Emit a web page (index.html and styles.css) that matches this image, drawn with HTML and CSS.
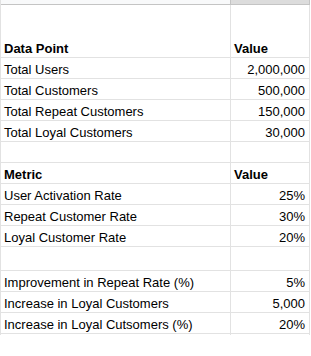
FILE: index.html
```html
<!DOCTYPE html>
<html>
<head>
<meta charset="utf-8">
<link rel="stylesheet" href="styles.css">
</head>
<body>
<div class="sheet">
  <div class="hdr"><div class="hc a"></div><div class="hc b"></div></div>
  <div class="r tall"><div class="c a bold">Data Point</div><div class="c b bold left">Value</div></div>
  <div class="r"><div class="c a">Total Users</div><div class="c b">2,000,000</div></div>
  <div class="r"><div class="c a">Total Customers</div><div class="c b">500,000</div></div>
  <div class="r"><div class="c a">Total Repeat Customers</div><div class="c b">150,000</div></div>
  <div class="r"><div class="c a">Total Loyal Customers</div><div class="c b">30,000</div></div>
  <div class="r"><div class="c a"></div><div class="c b"></div></div>
  <div class="r"><div class="c a bold">Metric</div><div class="c b bold left">Value</div></div>
  <div class="r"><div class="c a">User Activation Rate</div><div class="c b">25%</div></div>
  <div class="r"><div class="c a">Repeat Customer Rate</div><div class="c b">30%</div></div>
  <div class="r"><div class="c a">Loyal Customer Rate</div><div class="c b">20%</div></div>
  <div class="r mid"><div class="c a"></div><div class="c b"></div></div>
  <div class="r"><div class="c a">Improvement in Repeat Rate (%)</div><div class="c b">5%</div></div>
  <div class="r"><div class="c a">Increase in Loyal Customers</div><div class="c b">5,000</div></div>
  <div class="r"><div class="c a">Increase in Loyal Cutsomers (%)</div><div class="c b">20%</div></div>
  <div class="r end"><div class="c a"></div><div class="c b"></div></div>
</div>
</body>
</html>
```
FILE: styles.css
```css
html, body {
  margin: 0;
  padding: 0;
  background: #fff;
}
body {
  font-family: "Liberation Sans", Arial, sans-serif;
  font-size: 13px;
  color: #000;
  height: 356px;
  overflow: hidden;
}
.sheet {
  width: 310px;
  border-left: 1px solid #e2e2e2;
  box-sizing: border-box;
}
.hdr {
  display: flex;
  height: 4px;
  border-bottom: 1px solid #c4c4c4;
}
.hc.a {
  width: 229px;
  background: #f8f9fa;
  border-right: 1px solid #c4c4c4;
}
.hc.b {
  width: 78px;
  background: #dcdcdc;
  border-right: 1px solid #c4c4c4;
}
.r {
  display: flex;
  height: 20px;
  border-bottom: 1px solid #e2e2e2;
}
.r.tall { height: 52px; }
.r.mid { height: 23px; }
.r.end { height: 1px; border-bottom: 0; }
.c {
  display: flex;
  align-items: flex-end;
  box-sizing: border-box;
  padding: 0 4px 1px 3px;
  line-height: 15px;
  white-space: nowrap;
  border-right: 1px solid #e2e2e2;
}
.c.a {
  width: 230px;
}
.c.b {
  width: 79px;
  justify-content: flex-end;
}
.c.b.left {
  justify-content: flex-start;
}
.bold { font-weight: bold; }
```
